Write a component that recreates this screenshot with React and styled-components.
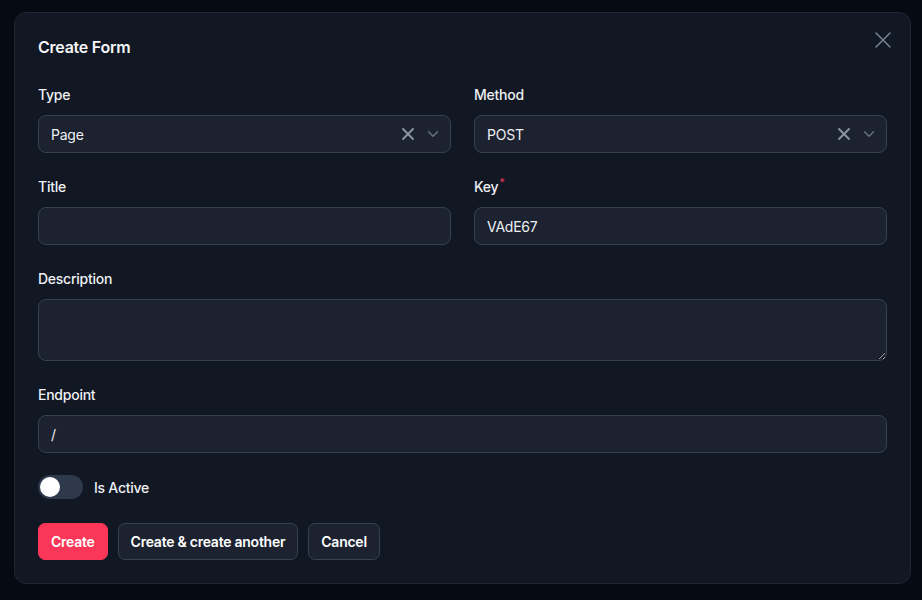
import React, { useState } from "react";
import styled, { createGlobalStyle } from "styled-components";
import { X, ChevronDown } from "lucide-react";

const GlobalStyle = createGlobalStyle`
  html, body {
    margin: 0;
    padding: 0;
    background: #050a13;
    font-family: "Inter", "Noto Sans", sans-serif;
    letter-spacing: -0.25px;
    color: #f3f4f6;
  }
  * { box-sizing: border-box; }
`;

function SelectField({ label, value }) {
  return (
    <Field>
      <Label>{label}</Label>
      <SelectBox>
        <SelectValue>{value}</SelectValue>
        <SelectIcons>
          <X size={20} strokeWidth={2.3} color="#8b93a1" />
          <ChevronDown size={18} strokeWidth={1.8} color="#6b7280" />
        </SelectIcons>
      </SelectBox>
    </Field>
  );
}

export default function App() {
  const [active, setActive] = useState(false);

  return (
    <>
      <GlobalStyle />
      <Page>
        <Modal>
          <CloseButton aria-label="Close">
            <X size={28} strokeWidth={1.3} />
          </CloseButton>
          <Heading>Create Form</Heading>

          <Grid>
            <SelectField label="Type" value="Page" />
            <SelectField label="Method" value="POST" />

            <Field>
              <Label>Title</Label>
              <Input defaultValue="" />
            </Field>
            <Field>
              <Label>
                Key<Required>*</Required>
              </Label>
              <Input defaultValue="VAdE67" />
            </Field>

            <Field $wide>
              <Label>Description</Label>
              <TextArea rows={2} />
            </Field>

            <Field $wide>
              <Label>Endpoint</Label>
              <Input defaultValue="/" />
            </Field>
          </Grid>

          <ToggleRow>
            <Switch $on={active} onClick={() => setActive(!active)}>
              <Knob $on={active} />
            </Switch>
            <ToggleLabel>Is Active</ToggleLabel>
          </ToggleRow>

          <Actions>
            <Button $primary>Create</Button>
            <Button>Create &amp; create another</Button>
            <Button>Cancel</Button>
          </Actions>
        </Modal>
      </Page>
    </>
  );
}

const Page = styled.div`
  width: 922px;
  height: 600px;
  padding: 12px 0 0 14px;
`;

const Modal = styled.div`
  position: relative;
  width: 897px;
  height: 572px;
  background: #111723;
  border: 1px solid #1f2632;
  border-radius: 12px;
  padding: 22px 23px 0 23px;
`;

const CloseButton = styled.button`
  position: absolute;
  top: 13px;
  right: 13px;
  background: none;
  border: none;
  padding: 0;
  color: #748091;
  cursor: pointer;
  display: flex;
`;

const Heading = styled.h2`
  margin: 0;
  font-size: 16px;
  line-height: 24px;
  font-weight: 600;
  color: #f5f6f8;
`;

const Grid = styled.div`
  margin-top: 26px;
  display: grid;
  grid-template-columns: 1fr 1fr;
  column-gap: 23px;
  row-gap: 24px;
`;

const Field = styled.div`
  display: flex;
  flex-direction: column;
  gap: 10px;
  grid-column: ${(p) => (p.$wide ? "1 / -1" : "auto")};
`;

const Label = styled.label`
  display: block;
  height: 20px;
  font-size: 14px;
  line-height: 20px;
  font-weight: 500;
  color: #eef0f3;
`;

const Required = styled.span`
  position: relative;
  top: -6px;
  margin-left: 1px;
  color: #e0314f;
  font-size: 11px;
`;

const inputBase = `
  width: 100%;
  background: #1c2230;
  border: 1px solid #394150;
  border-radius: 8px;
  color: #eef0f3;
  font-family: "Inter", "Noto Sans", sans-serif;
  font-size: 14px;
  letter-spacing: -0.25px;
  outline: none;
`;

const Input = styled.input`
  ${inputBase}
  display: block;
  height: 38px;
  padding: 0 12px;
`;

const TextArea = styled.textarea`
  ${inputBase}
  display: block;
  height: 62px;
  padding: 8px 12px;
  resize: vertical;
`;

const SelectBox = styled.div`
  ${inputBase}
  height: 38px;
  padding: 0 8px 0 12px;
  display: flex;
  align-items: center;
  justify-content: space-between;
`;

const SelectValue = styled.span`
  font-size: 14px;
`;

const SelectIcons = styled.div`
  display: flex;
  align-items: center;
  gap: 6px;
`;

const ToggleRow = styled.div`
  margin-top: 22px;
  display: flex;
  align-items: center;
  gap: 11px;
`;

const Switch = styled.button`
  position: relative;
  width: 45px;
  height: 24px;
  border-radius: 12px;
  border: none;
  padding: 0;
  background: ${(p) => (p.$on ? "#f43f5e" : "#2e3a4c")};
  cursor: pointer;
`;

const Knob = styled.span`
  position: absolute;
  top: 2px;
  left: ${(p) => (p.$on ? "23px" : "2px")};
  width: 20px;
  height: 20px;
  border-radius: 50%;
  background: #ffffff;
`;

const ToggleLabel = styled.span`
  font-size: 14px;
  font-weight: 500;
  color: #eef0f3;
`;

const Actions = styled.div`
  margin-top: 24px;
  display: flex;
  gap: 10px;
`;

const Button = styled.button`
  height: 37px;
  padding: 0 12px;
  border-radius: 7px;
  font-family: "Inter", "Noto Sans", sans-serif;
  font-size: 14px;
  font-weight: 600;
  letter-spacing: -0.25px;
  color: #ffffff;
  cursor: pointer;
  background: ${(p) => (p.$primary ? "#fb3759" : "#1c2230")};
  border: 1px solid ${(p) => (p.$primary ? "#fb3759" : "#394150")};
`;
